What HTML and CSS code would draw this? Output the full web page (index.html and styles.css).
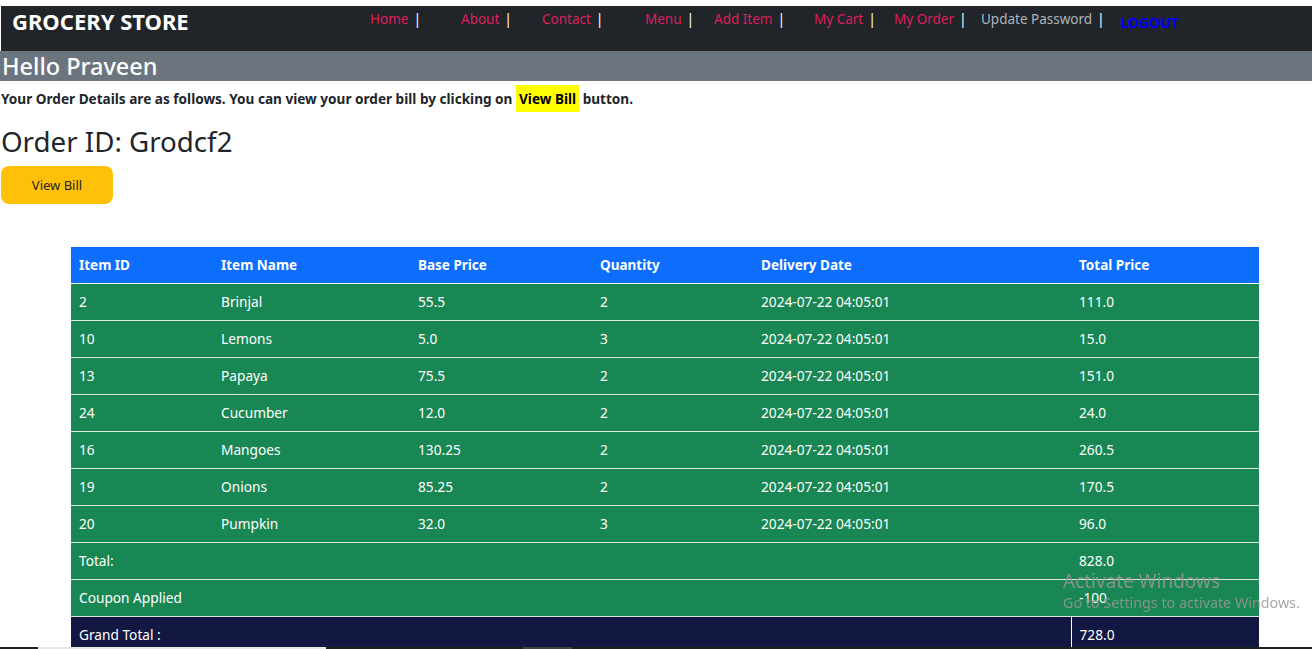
FILE: index.html
```html
<!DOCTYPE html>
<html>
<head>
<meta charset="utf-8">
<title>Grocery Store - My Order</title>
<link rel="stylesheet" href="styles.css">
</head>
<body>
<div class="top-gap"></div>
<nav class="navbar">
  <div class="brand">GROCERY STORE</div>
  <ul class="nav-links">
    <li class="w-home"><a class="lnk" href="#">Home</a><span class="sep">|</span></li>
    <li class="w-about"><a class="lnk" href="#">About</a><span class="sep">|</span></li>
    <li class="w-contact"><a class="lnk" href="#">Contact</a><span class="sep">|</span></li>
    <li class="w-menu"><a class="lnk" href="#">Menu</a><span class="sep">|</span></li>
    <li class="w-add"><a class="lnk" href="#">Add Item</a><span class="sep">|</span></li>
    <li class="w-cart"><a class="lnk" href="#">My Cart</a><span class="sep">|</span></li>
    <li class="w-order"><a class="lnk" href="#">My Order</a><span class="sep">|</span></li>
    <li class="w-pass"><a class="lnk muted" href="#">Update Password</a><span class="sep">|</span></li>
    <li class="w-logout"><a class="logout" href="#">LOGOUT</a></li>
  </ul>
</nav>
<div class="hello">Hello Praveen</div>
<p class="intro">Your Order Details are as follows. You can view your order bill by clicking on <span class="mark">View Bill</span> button.</p>
<h2 class="order-id">Order ID: Grodcf2</h2>
<button class="btn-bill">View Bill</button>

<table class="orders">
  <thead>
    <tr><th class="c1">Item ID</th><th class="c2">Item Name</th><th class="c3">Base Price</th><th class="c4">Quantity</th><th class="c5">Delivery Date</th><th class="c6">Total Price</th></tr>
  </thead>
  <tbody>
    <tr><td>2</td><td>Brinjal</td><td>55.5</td><td>2</td><td>2024-07-22 04:05:01</td><td>111.0</td></tr>
    <tr><td>10</td><td>Lemons</td><td>5.0</td><td>3</td><td>2024-07-22 04:05:01</td><td>15.0</td></tr>
    <tr><td>13</td><td>Papaya</td><td>75.5</td><td>2</td><td>2024-07-22 04:05:01</td><td>151.0</td></tr>
    <tr><td>24</td><td>Cucumber</td><td>12.0</td><td>2</td><td>2024-07-22 04:05:01</td><td>24.0</td></tr>
    <tr><td>16</td><td>Mangoes</td><td>130.25</td><td>2</td><td>2024-07-22 04:05:01</td><td>260.5</td></tr>
    <tr><td>19</td><td>Onions</td><td>85.25</td><td>2</td><td>2024-07-22 04:05:01</td><td>170.5</td></tr>
    <tr><td>20</td><td>Pumpkin</td><td>32.0</td><td>3</td><td>2024-07-22 04:05:01</td><td>96.0</td></tr>
    <tr><td colspan="5">Total:</td><td>828.0</td></tr>
    <tr><td colspan="5">Coupon Applied</td><td>-100</td></tr>
    <tr class="grand"><td colspan="5">Grand Total :</td><td class="gt-val">728.0</td></tr>
  </tbody>
</table>

<div class="watermark">
  <div class="wm-title">Activate Windows</div>
  <div class="wm-sub">Go to Settings to activate Windows.</div>
</div>
<div class="taskbar"><span class="tb-a"></span><span class="tb-b"></span></div>
</body>
</html>
```
FILE: styles.css
```css
* { box-sizing: border-box; }
html, body { margin: 0; padding: 0; }
body {
  font-family: "Noto Sans", "Open Sans", sans-serif;
  color: #212529;
  background: #fff;
  font-size: 14px;
  overflow: hidden;
  height: 649px;
}
.top-gap { height: 6px; }
.navbar {
  background: #212529;
  height: 45px;
  display: flex;
  align-items: flex-start;
  margin-left: 1px;
}
.brand {
  color: #fff;
  font-weight: 700;
  font-size: 22px;
  line-height: 30px;
  padding-left: 11px;
  padding-top: 0;
  width: 369px;
  flex: none;
}
.nav-links {
  list-style: none;
  margin: 0;
  padding: 0;
  display: flex;
  padding-top: 3px;
}
.nav-links li { display: flex; align-items: baseline; flex: none; }
.lnk { color: #dc1f5e; text-decoration: none; font-size: 13.5px; }
.lnk.muted { color: #adb5bd; }
.sep { color: #fff; font-size: 14px; margin-left: 5px; }
.logout { color: #0000ff; font-weight: 700; font-size: 14px; text-decoration: none; padding-top: 4px; margin-left: -2px; }
.w-home { width: 91px; }
.w-about { width: 81px; }
.w-contact { width: 103px; }
.w-menu { width: 69px; }
.w-add { width: 100px; }
.w-cart { width: 80px; }
.w-order { width: 87px; }
.w-pass { width: 141px; }
.hello {
  background: #6c757d;
  color: #fff;
  font-size: 23.5px;
  font-weight: 500;
  height: 30px;
  line-height: 30px;
  padding-left: 2px;
}
.intro {
  margin: 5px 0 0 1px;
  font-size: 13.6px;
  font-weight: 700;
  line-height: 26px;
}
.mark {
  background: #ffff00;
  padding: 4px 3px;
  color: #000;
}
.order-id {
  font-size: 27.7px;
  font-weight: 400;
  margin: 11px 0 0 1px;
  line-height: 36px;
}
.btn-bill {
  display: block;
  margin: 7px 0 0 1px;
  width: 112px;
  height: 38px;
  background: #ffc107;
  border: none;
  border-radius: 8px;
  font-family: inherit;
  font-size: 13px;
  color: #212529;
}
.orders {
  margin: 43px 0 0 71px;
  width: 1188px;
  border-collapse: collapse;
  font-size: 13.7px;
  color: #fff;
}
.orders th, .orders td {
  text-align: left;
  padding: 0 8px;
  height: 37px;
}
.orders th { background: #0d6efd; font-weight: 700; font-size: 13.5px; height: 36px; border-bottom: 1px solid #fff; }
.orders td { background: #198754; border-bottom: 1px solid #dfe7e2; }
.orders .grand td { background: #131842; border-bottom: none; }
.orders .grand .gt-val { border-left: 1px solid #fff; }
.c1 { width: 142px; }
.c2 { width: 197px; }
.c3 { width: 182px; }
.c4 { width: 161px; }
.c5 { width: 318px; }
.c6 { width: 188px; }
.watermark {
  position: fixed;
  left: 1063px;
  top: 570px;
  color: rgba(150, 150, 150, 0.85);
}
.wm-title { font-size: 19px; line-height: 22px; }
.wm-sub { font-size: 14.3px; line-height: 22px; }
.taskbar {
  position: fixed;
  left: 0;
  right: 0;
  bottom: 0;
  height: 2px;
  background: #202020;
}
.tb-a { position: absolute; left: 38px; width: 288px; top: 0; height: 2px; background: #e8e8e8; }
.tb-b { position: absolute; left: 523px; width: 49px; top: 0; height: 2px; background: #444; }
```
